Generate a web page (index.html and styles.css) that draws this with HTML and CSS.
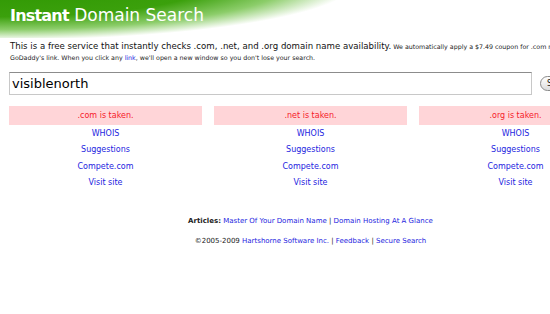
FILE: index.html
```html
<!DOCTYPE html>
<html lang="en">
<head>
  <meta charset="UTF-8">
  <title>Instant Domain Search</title>
  <link rel="stylesheet" href="styles.css">
</head>
<body>
  <div class="header">
    <h1><strong>Instant</strong> Domain Search</h1>
  </div>

  <div class="page">
    <p class="intro">
      <span class="lead">This is a free service that instantly checks .com, .net, and .org domain name availability.</span>
      We automatically apply a $7.49 coupon for .com names when you use GoDaddy's link. When you click any <a href="#">link</a>, we'll open a new window so you don't lose your search.
    </p>

    <form class="search" onsubmit="return false">
      <input type="text" class="query" value="visiblenorth">
      <button type="submit" class="go">Search</button>
    </form>

    <div class="results">
      <div class="result">
        <div class="status">.com is taken.</div>
        <a href="#">WHOIS</a>
        <a href="#">Suggestions</a>
        <a href="#">Compete.com</a>
        <a href="#">Visit site</a>
      </div>
      <div class="result">
        <div class="status">.net is taken.</div>
        <a href="#">WHOIS</a>
        <a href="#">Suggestions</a>
        <a href="#">Compete.com</a>
        <a href="#">Visit site</a>
      </div>
      <div class="result">
        <div class="status">.org is taken.</div>
        <a href="#">WHOIS</a>
        <a href="#">Suggestions</a>
        <a href="#">Compete.com</a>
        <a href="#">Visit site</a>
      </div>
    </div>

    <div class="footer">
      <p><strong>Articles:</strong> <a href="#">Master Of Your Domain Name</a> | <a href="#">Domain Hosting At A Glance</a></p>
      <p>&copy;2005-2009 <a href="#">Hartshorne Software Inc.</a> | <a href="#">Feedback</a> | <a href="#">Secure Search</a></p>
    </div>
  </div>
</body>
</html>
```

FILE: styles.css
```css
html, body {
  overflow: hidden;
}
body {
  margin: 0;
  font-family: "DejaVu Sans", Verdana, sans-serif;
  color: #111;
  background-color: #fff;
}
a {
  color: #2424e0;
  text-decoration: none;
}
.header {
  height: 38px;
  background: radial-gradient(ellipse 355px 58px at 0 -18px, #2c9500 0%, #3ba00c 60%, #8ccd6a 82%, #ffffff 100%);
}
.header h1 {
  margin: 0;
  padding: 5px 0 0 10px;
  font-size: 17px;
  font-weight: normal;
  color: #fff;
}
.header h1 strong {
  font-size: 16px;
  font-weight: bold;
  letter-spacing: -0.8px;
}
.page {
  width: 603px;
  padding: 0 9px;
}
.intro {
  margin: 3px -8px 0 1px;
  font-size: 6.3px;
  line-height: 11px;
  color: #222;
}
.intro .lead {
  font-size: 8.6px;
  color: #111;
}
.search {
  display: flex;
  align-items: center;
  gap: 8px;
  margin-top: 9px;
}
.query {
  width: 523px;
  height: 23px;
  box-sizing: border-box;
  margin: 0;
  padding: 0 2px;
  border: 1px solid #c8c8c8;
  border-top-color: #8c8c8c;
  font-family: "DejaVu Sans", Verdana, sans-serif;
  font-size: 13px;
  color: #000;
}
.go {
  height: 15px;
  padding: 0 6px;
  border: 1px solid #8a8a8a;
  border-radius: 8px;
  background: linear-gradient(#ffffff, #dcdcdc);
  font-family: "DejaVu Sans", Verdana, sans-serif;
  font-size: 8px;
  color: #111;
}
.results {
  display: grid;
  grid-template-columns: repeat(3, 193px);
  gap: 12px;
  margin-top: 11px;
}
.result {
  display: flex;
  flex-direction: column;
  align-items: center;
  font-size: 8px;
}
.result .status {
  align-self: stretch;
  height: 19px;
  line-height: 19px;
  margin-bottom: 1px;
  background-color: #ffd5d8;
  color: #f5202a;
  text-align: center;
}
.result a {
  line-height: 16.3px;
}
.footer {
  margin-top: 25px;
  text-align: center;
  font-size: 7px;
  color: #222;
}
.footer p {
  margin: 0 0 9px;
  line-height: 11px;
}
```
